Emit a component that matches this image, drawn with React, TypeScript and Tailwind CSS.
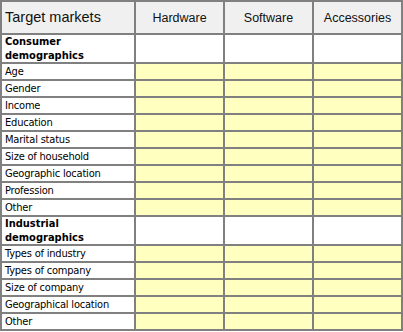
import React from 'react';

type Row = { label: string; group?: boolean };

const rows: Row[] = [
  { label: 'Consumer demographics', group: true },
  { label: 'Age' },
  { label: 'Gender' },
  { label: 'Income' },
  { label: 'Education' },
  { label: 'Marital status' },
  { label: 'Size of household' },
  { label: 'Geographic location' },
  { label: 'Profession' },
  { label: 'Other' },
  { label: 'Industrial demographics', group: true },
  { label: 'Types of industry' },
  { label: 'Types of company' },
  { label: 'Size of company' },
  { label: 'Geographical location' },
  { label: 'Other' },
];

const columns = ['Hardware', 'Software', 'Accessories'];

const bodyFont = "font-['DejaVu_Sans_Condensed','DejaVu_Sans',sans-serif]";
const headFont = "font-['Liberation_Sans',Arial,sans-serif]";

export default function App() {
  return (
    <div className="w-[403px] h-[332px] bg-white">
      <div className="grid grid-cols-[132px_87px_87px_87px] gap-[2px] bg-[#808080] p-[2px] w-[403px]">
        {/* header */}
        <div className={`h-[31px] bg-[#f0f0f0] flex items-center pl-[3px] pt-[1px] text-[14.5px] text-[#111] ${headFont}`}>
          Target markets
        </div>
        {columns.map(c => (
          <div key={c} className={`h-[31px] bg-[#f0f0f0] flex items-center justify-center pt-[1px] text-[12.5px] text-[#111] ${headFont}`}>
            {c}
          </div>
        ))}

        {rows.map((r, i) => (
          <React.Fragment key={i}>
            {r.group ? (
              <div className={`h-[27px] bg-white pl-[3px] pr-[30px] text-[11px] leading-[14px] font-bold text-black ${bodyFont}`}>
                {r.label}
              </div>
            ) : (
              <div className={`h-[15px] bg-white pl-[3px] text-[11px] leading-[15px] tracking-[-0.2px] text-black whitespace-nowrap ${bodyFont}`}>
                {r.label}
              </div>
            )}
            {columns.map(c => (
              <div key={c} className={r.group ? 'bg-white' : 'bg-[#ffffc0]'} />
            ))}
          </React.Fragment>
        ))}
      </div>
    </div>
  );
}
